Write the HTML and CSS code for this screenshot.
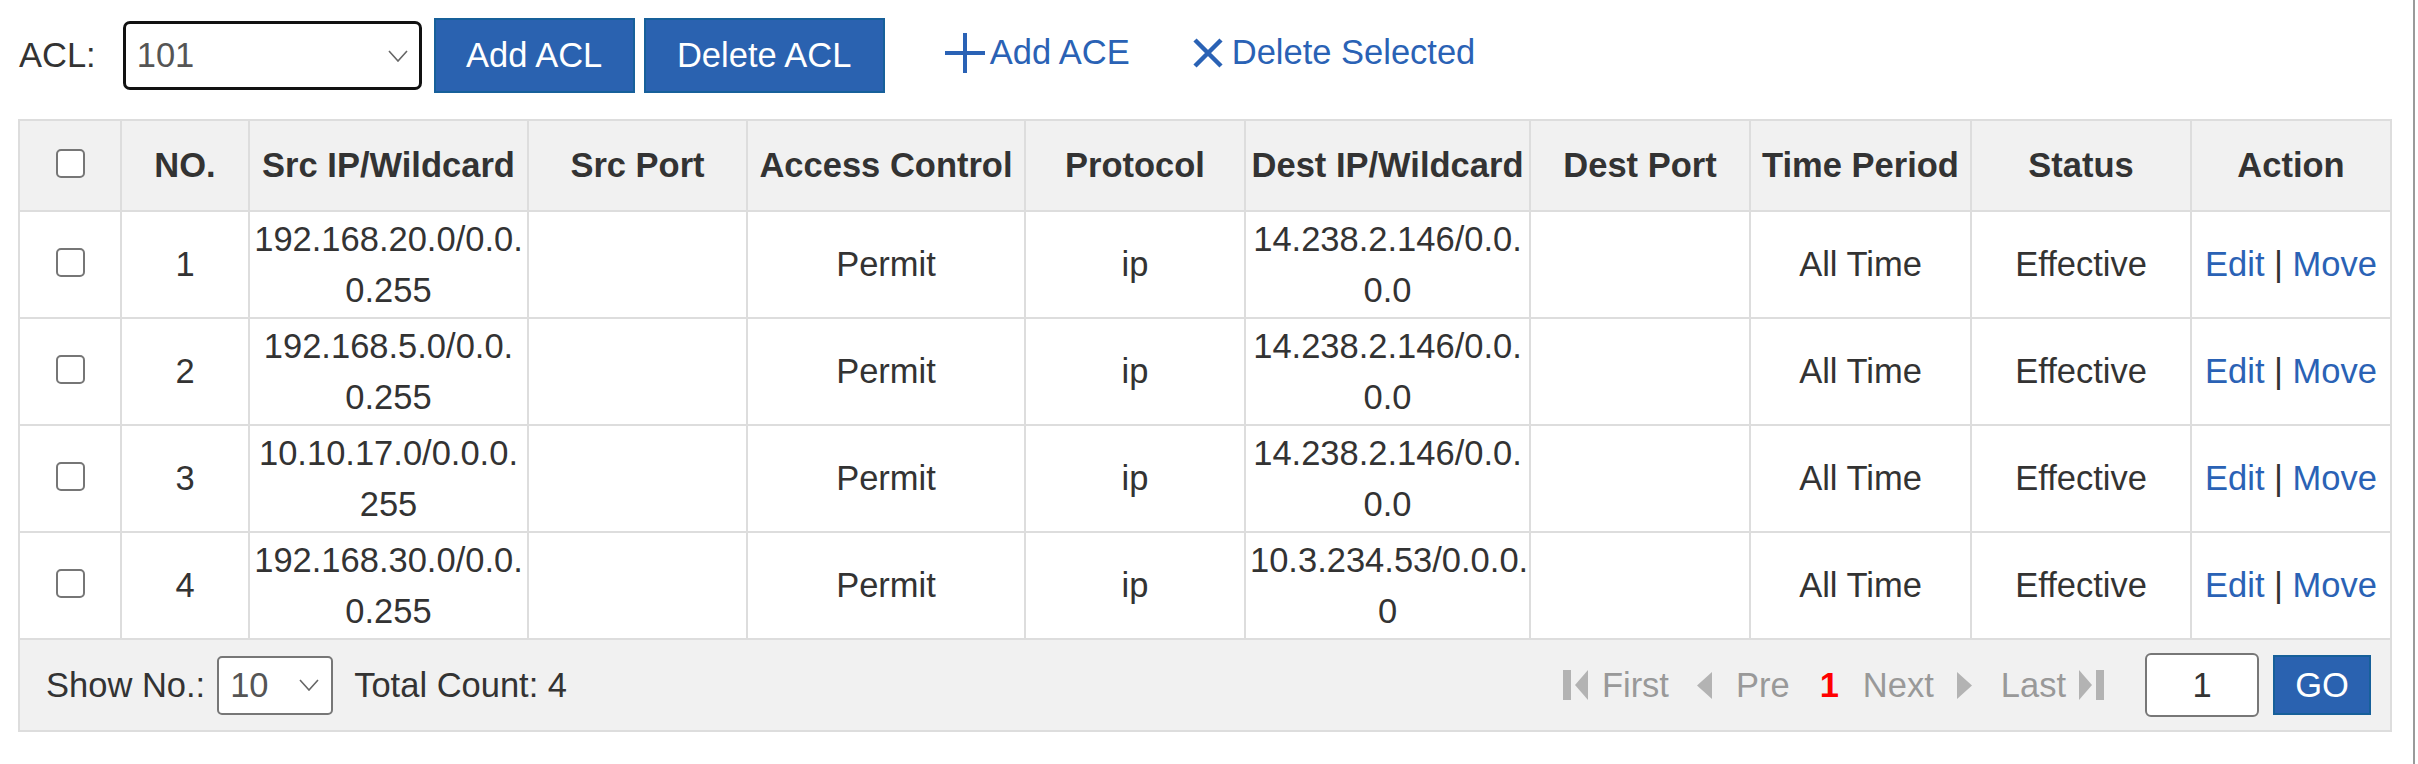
FILE: index.html
```html
<!DOCTYPE html>
<html>
<head>
<meta charset="utf-8">
<link rel="stylesheet" href="styles.css">
</head>
<body>
<div class="frame">
  <div class="toolbar">
    <span class="acl-label">ACL:</span>
    <div class="select select-acl">
      <span>101</span>
      <svg class="chev" width="20" height="12" viewBox="0 0 20 12"><path d="M1 1L10 11L19 1" fill="none" stroke="#666" stroke-width="1.6"/></svg>
    </div>
    <div class="btn btn-add">Add ACL</div>
    <div class="btn btn-del">Delete ACL</div>
    <a class="tlink link-add"><svg width="40" height="40" viewBox="0 0 40 40"><path d="M20 0V40M0 20H40" stroke="#2a62b5" stroke-width="4"/></svg><span class="tl-text-add">Add ACE</span></a>
    <a class="tlink link-del"><svg width="30" height="30" viewBox="0 0 30 30"><path d="M2 2L28 28M28 2L2 28" stroke="#2a62b5" stroke-width="4.5"/></svg><span class="tl-text-del">Delete Selected</span></a>
  </div>

  <table class="grid">
    <colgroup>
      <col class="c1"><col class="c2"><col class="c3"><col class="c4"><col class="c5"><col class="c6"><col class="c7"><col class="c8"><col class="c9"><col class="c10"><col class="c11">
    </colgroup>
    <thead>
      <tr>
        <th><span class="cb"></span></th>
        <th>NO.</th>
        <th>Src IP/Wildcard</th>
        <th>Src Port</th>
        <th>Access Control</th>
        <th>Protocol</th>
        <th>Dest IP/Wildcard</th>
        <th>Dest Port</th>
        <th>Time Period</th>
        <th>Status</th>
        <th>Action</th>
      </tr>
    </thead>
    <tbody>
      <tr>
        <td><span class="cb"></span></td>
        <td>1</td>
        <td>192.168.20.0/0.0.<br>0.255</td>
        <td></td>
        <td>Permit</td>
        <td>ip</td>
        <td>14.238.2.146/0.0.<br>0.0</td>
        <td></td>
        <td>All Time</td>
        <td>Effective</td>
        <td><a class="act">Edit</a> | <a class="act">Move</a></td>
      </tr>
      <tr>
        <td><span class="cb"></span></td>
        <td>2</td>
        <td>192.168.5.0/0.0.<br>0.255</td>
        <td></td>
        <td>Permit</td>
        <td>ip</td>
        <td>14.238.2.146/0.0.<br>0.0</td>
        <td></td>
        <td>All Time</td>
        <td>Effective</td>
        <td><a class="act">Edit</a> | <a class="act">Move</a></td>
      </tr>
      <tr>
        <td><span class="cb"></span></td>
        <td>3</td>
        <td>10.10.17.0/0.0.0.<br>255</td>
        <td></td>
        <td>Permit</td>
        <td>ip</td>
        <td>14.238.2.146/0.0.<br>0.0</td>
        <td></td>
        <td>All Time</td>
        <td>Effective</td>
        <td><a class="act">Edit</a> | <a class="act">Move</a></td>
      </tr>
      <tr>
        <td><span class="cb"></span></td>
        <td>4</td>
        <td>192.168.30.0/0.0.<br>0.255</td>
        <td></td>
        <td>Permit</td>
        <td>ip</td>
        <td>10.3.234.53/0.0.0.<br>0</td>
        <td></td>
        <td>All Time</td>
        <td>Effective</td>
        <td><a class="act">Edit</a> | <a class="act">Move</a></td>
      </tr>
    </tbody>
  </table>

  <div class="foot">
    <span class="show-label">Show No.:</span>
    <div class="select select-num">
      <span>10</span>
      <svg class="chev" width="20" height="12" viewBox="0 0 20 12"><path d="M1 1L10 11L19 1" fill="none" stroke="#666" stroke-width="1.6"/></svg>
    </div>
    <span class="total">Total Count: 4</span>
    <div class="pager">
      <svg class="pi pi-first" width="25" height="30" viewBox="0 0 25 30"><rect x="0" y="0" width="8" height="30" fill="#b3b3b3"/><path d="M25 0V30L12 15Z" fill="#b3b3b3"/></svg>
      <span class="pt pt-first">First</span>
      <svg class="pi pi-pre" width="15" height="27" viewBox="0 0 15 27"><path d="M15 0V27L0 13.5Z" fill="#b3b3b3"/></svg>
      <span class="pt pt-pre">Pre</span>
      <span class="cur">1</span>
      <span class="pt pt-next">Next</span>
      <svg class="pi pi-next" width="15" height="27" viewBox="0 0 15 27"><path d="M0 0V27L15 13.5Z" fill="#b3b3b3"/></svg>
      <span class="pt pt-last">Last</span>
      <svg class="pi pi-last" width="25" height="30" viewBox="0 0 25 30"><path d="M0 0V30L13 15Z" fill="#b3b3b3"/><rect x="17" y="0" width="8" height="30" fill="#b3b3b3"/></svg>
      <div class="page-input">1</div>
      <div class="btn btn-go">GO</div>
    </div>
  </div>
</div>
</body>
</html>
```
FILE: styles.css
```css
html, body {
  margin: 0;
  padding: 0;
  background: #fff;
}
body {
  font-family: "Liberation Sans", Arial, sans-serif;
  font-size: 34.5px;
  color: #333;
}
.frame {
  width: 2413px;
  min-height: 764px;
  border-right: 2px solid #9a9a9a;
}
.toolbar {
  display: flex;
  align-items: center;
  height: 111px;
  padding-left: 19px;
}
.acl-label {
  margin-right: 27px;
}
.select {
  box-sizing: border-box;
  display: flex;
  align-items: center;
  justify-content: space-between;
  background: #fff;
  color: #555;
}
.select-acl {
  width: 299px;
  height: 69px;
  border: 3px solid #111;
  border-radius: 7px;
  padding: 0 11px 0 11px;
}
.btn {
  box-sizing: border-box;
  display: flex;
  align-items: center;
  justify-content: center;
  background: #2a62b0;
  border: 2px solid #17609a;
  color: #fff;
}
.btn-add {
  width: 201px;
  height: 75px;
  margin-left: 12px;
}
.btn-del {
  width: 241px;
  height: 75px;
  margin-left: 9px;
}
.tlink {
  display: flex;
  align-items: center;
  color: #2a62b5;
  margin-bottom: 6px;
}
.link-add {
  margin-left: 60px;
}
.tl-text-add {
  margin-left: 5px;
}
.link-del {
  margin-left: 63px;
}
.tl-text-del {
  margin-left: 9px;
}
.grid {
  margin-top: 8px;
  margin-left: 18px;
  width: 2374px;
  border-collapse: collapse;
  table-layout: fixed;
}
.c1 { width: 102px; }
.c2 { width: 128px; }
.c3 { width: 279px; }
.c4 { width: 219px; }
.c5 { width: 278px; }
.c6 { width: 220px; }
.c7 { width: 285px; }
.c8 { width: 220px; }
.c9 { width: 221px; }
.c10 { width: 220px; }
.c11 { width: 200px; }
.grid th, .grid td {
  border: 2px solid #dddddd;
  text-align: center;
  vertical-align: middle;
  padding: 0 4px;
  line-height: 51px;
  white-space: nowrap;
}
.grid th {
  background: #f1f1f1;
  font-weight: bold;
  height: 89px;
}
.grid td {
  height: 105px;
}
.cb {
  display: inline-block;
  box-sizing: border-box;
  width: 29px;
  height: 29px;
  border: 2px solid #767676;
  border-radius: 5px;
  background: #fff;
  vertical-align: middle;
  margin-bottom: 9px;
}
.act {
  color: #2a62b5;
}
.foot {
  margin-left: 18px;
  width: 2374px;
  box-sizing: border-box;
  height: 92px;
  border: 2px solid #dddddd;
  border-top: none;
  background: #f1f1f1;
  display: flex;
  align-items: center;
  padding: 0 19px 0 26px;
}
.select-num {
  width: 116px;
  height: 59px;
  border: 2px solid #777;
  border-radius: 5px;
  padding: 0 12px 0 11px;
  margin-left: 12px;
}
.total {
  margin-left: 21px;
}
.pager {
  margin-left: auto;
  display: flex;
  align-items: center;
}
.pi {
  display: block;
}
.pt {
  color: #999;
}
.pt-first { margin-left: 14px; }
.pi-pre { margin-left: 28px; }
.pt-pre { margin-left: 24px; }
.cur {
  color: #ff0000;
  font-weight: bold;
  margin-left: 30px;
}
.pt-next { margin-left: 24px; }
.pi-next { margin-left: 23px; }
.pt-last { margin-left: 29px; }
.pi-last { margin-left: 13px; }
.page-input {
  box-sizing: border-box;
  width: 114px;
  height: 64px;
  margin-left: 41px;
  border: 2px solid #777;
  border-radius: 6px;
  background: #fff;
  display: flex;
  align-items: center;
  justify-content: center;
  color: #333;
}
.btn-go {
  width: 98px;
  height: 60px;
  margin-left: 14px;
}
```
